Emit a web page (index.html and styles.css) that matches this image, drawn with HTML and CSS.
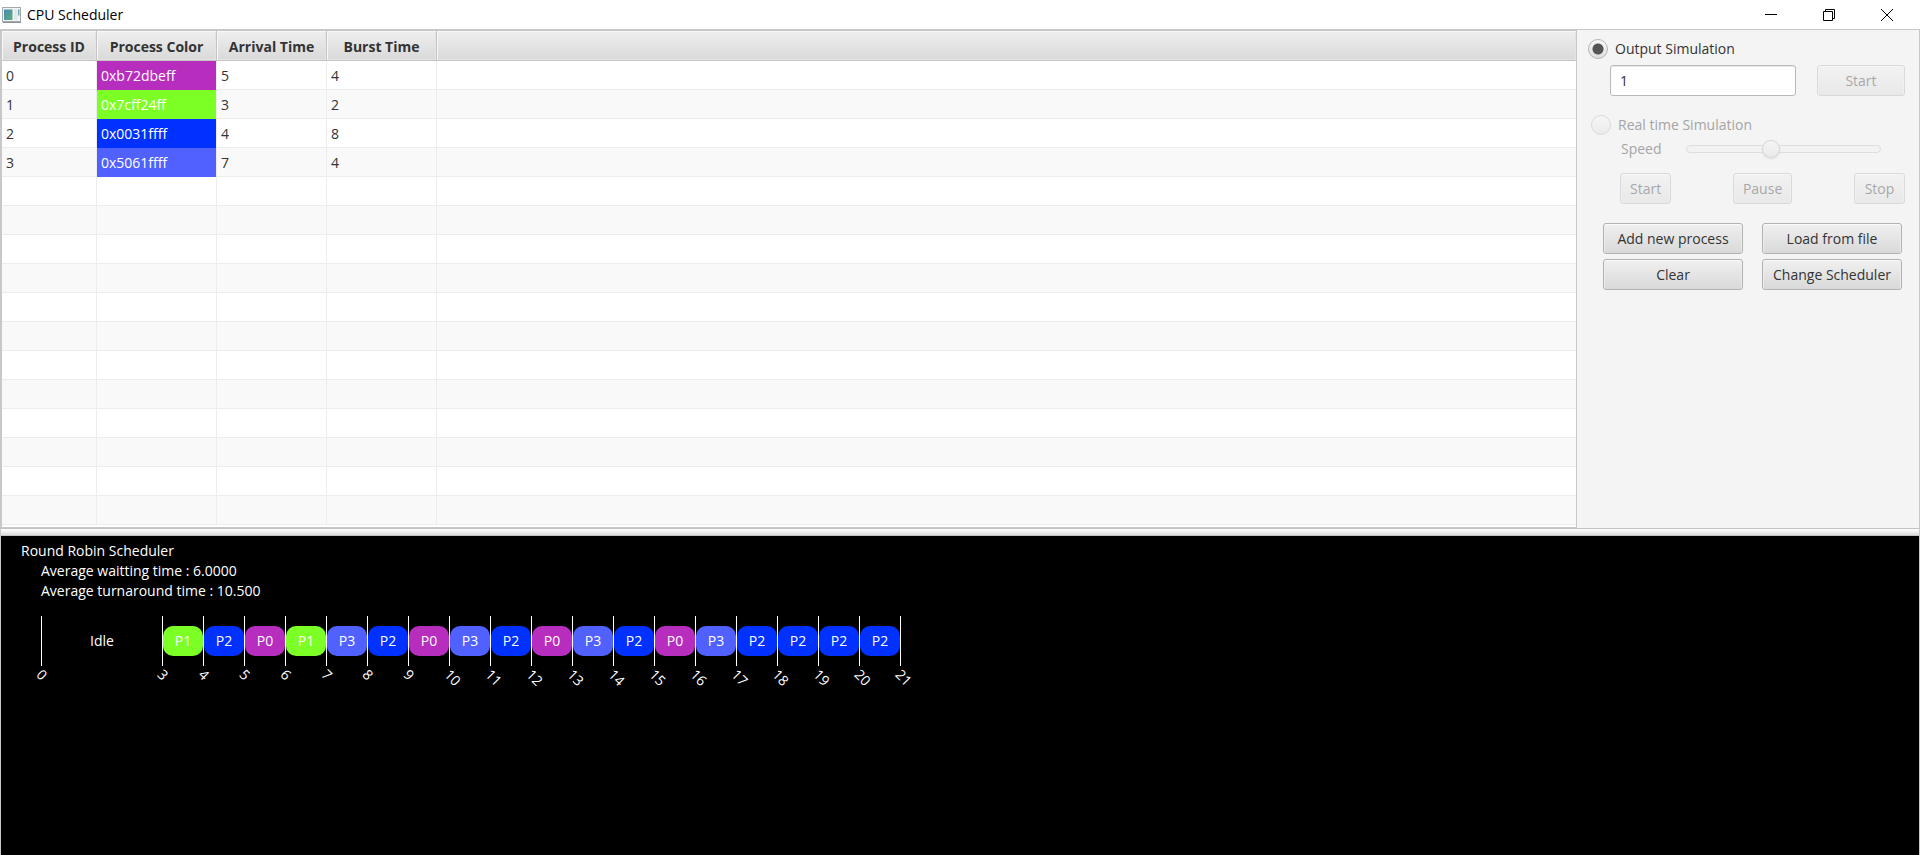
FILE: index.html
```
<!DOCTYPE html>
<html lang="en">
<head>
<meta charset="utf-8">
<title>CPU Scheduler</title>
<link rel="stylesheet" href="styles.css">
</head>
<body>
<header class="titlebar">
  <svg class="app-icon" width="20" height="16" viewBox="0 0 20 16" aria-hidden="true">
    <defs><linearGradient id="pane" x1="0" y1="0" x2="1" y2="1"><stop offset="0" stop-color="#4a87b0"/><stop offset="1" stop-color="#5fae7c"/></linearGradient></defs>
    <rect x="0.500" y="0.500" width="18" height="14" fill="#f1f3f4" stroke="#a3a8ab"/>
    <path d="M1 15.500H19" stroke="#8d9193"/>
    <rect x="2" y="2.500" width="8.500" height="10.500" fill="url(#pane)"/>
    <rect x="12" y="2.500" width="3.500" height="10.500" fill="#e2e7ea"/>
    <rect x="16" y="2.500" width="1.500" height="6" fill="#6cabb0"/>
  </svg>
  <h1 class="title">CPU Scheduler</h1>
  <div class="window-controls">
    <button class="window-button" aria-label="Minimize"><svg width="12" height="12" viewBox="0 0 12 12"><path d="M0 5.500H12"/></svg></button>
    <button class="window-button" aria-label="Restore"><svg width="12" height="12" viewBox="0 0 12 12"><path d="M0.500 2.500H9.500V11.500H0.500ZM2.500 2.500V0.500H11.500V9.500H9.500"/></svg></button>
    <button class="window-button" aria-label="Close"><svg width="12" height="12" viewBox="0 0 12 12"><path d="M0 0L12 12M12 0L0 12"/></svg></button>
  </div>
</header>
<main class="split">
  <div class="top">
    <div class="table-pane">
      <table class="processes">
        <colgroup><col class="col-id"><col class="col-color"><col class="col-time"><col class="col-time"><col></colgroup>
        <thead><tr><th>Process ID</th><th>Process Color</th><th>Arrival Time</th><th>Burst Time</th><td></td></tr></thead>
        <tbody>
          <tr><td>0</td><td class="swatch magenta">0xb72dbeff</td><td>5</td><td>4</td><td></td></tr>
          <tr><td>1</td><td class="swatch green">0x7cff24ff</td><td>3</td><td>2</td><td></td></tr>
          <tr><td>2</td><td class="swatch blue">0x0031ffff</td><td>4</td><td>8</td><td></td></tr>
          <tr><td>3</td><td class="swatch indigo">0x5061ffff</td><td>7</td><td>4</td><td></td></tr>
          <tr><td></td><td></td><td></td><td></td><td></td></tr>
          <tr><td></td><td></td><td></td><td></td><td></td></tr>
          <tr><td></td><td></td><td></td><td></td><td></td></tr>
          <tr><td></td><td></td><td></td><td></td><td></td></tr>
          <tr><td></td><td></td><td></td><td></td><td></td></tr>
          <tr><td></td><td></td><td></td><td></td><td></td></tr>
          <tr><td></td><td></td><td></td><td></td><td></td></tr>
          <tr><td></td><td></td><td></td><td></td><td></td></tr>
          <tr><td></td><td></td><td></td><td></td><td></td></tr>
          <tr><td></td><td></td><td></td><td></td><td></td></tr>
          <tr><td></td><td></td><td></td><td></td><td></td></tr>
          <tr><td></td><td></td><td></td><td></td><td></td></tr>
        </tbody>
      </table>
    </div>
    <form class="controls">
      <label class="radio"><input type="radio" name="mode" checked>Output Simulation</label>
      <div class="output-row">
        <input class="field" type="text" value="1" aria-label="Output simulation value">
        <button class="button wide" type="button" disabled>Start</button>
      </div>
      <label class="radio realtime"><input type="radio" name="mode" disabled>Real time Simulation</label>
      <div class="speed-row">
        <label for="speed">Speed</label>
        <input class="slider" id="speed" type="range" min="0" max="100" value="43" disabled>
      </div>
      <div class="playback">
        <button class="button" type="button" disabled>Start</button>
        <button class="button" type="button" disabled>Pause</button>
        <button class="button" type="button" disabled>Stop</button>
      </div>
      <div class="actions">
        <button class="button" type="button">Add new process</button>
        <button class="button" type="button">Load from file</button>
        <button class="button" type="button">Clear</button>
        <button class="button" type="button">Change Scheduler</button>
      </div>
    </form>
  </div>
  <div class="divider"></div>
  <section class="output">
    <h2 class="scheduler">Round Robin Scheduler</h2>
    <p class="stat">Average waitting time : 6.0000</p>
    <p class="stat">Average turnaround time : 10.500</p>
    <ol class="gantt">
      <li class="slot idle"><div class="lane"><span class="bar">Idle</span></div><span class="tick">0</span></li>
      <li class="slot"><div class="lane"><span class="bar green">P1</span></div><span class="tick">3</span></li>
      <li class="slot"><div class="lane"><span class="bar blue">P2</span></div><span class="tick">4</span></li>
      <li class="slot"><div class="lane"><span class="bar magenta">P0</span></div><span class="tick">5</span></li>
      <li class="slot"><div class="lane"><span class="bar green">P1</span></div><span class="tick">6</span></li>
      <li class="slot"><div class="lane"><span class="bar indigo">P3</span></div><span class="tick">7</span></li>
      <li class="slot"><div class="lane"><span class="bar blue">P2</span></div><span class="tick">8</span></li>
      <li class="slot"><div class="lane"><span class="bar magenta">P0</span></div><span class="tick">9</span></li>
      <li class="slot"><div class="lane"><span class="bar indigo">P3</span></div><span class="tick">10</span></li>
      <li class="slot"><div class="lane"><span class="bar blue">P2</span></div><span class="tick">11</span></li>
      <li class="slot"><div class="lane"><span class="bar magenta">P0</span></div><span class="tick">12</span></li>
      <li class="slot"><div class="lane"><span class="bar indigo">P3</span></div><span class="tick">13</span></li>
      <li class="slot"><div class="lane"><span class="bar blue">P2</span></div><span class="tick">14</span></li>
      <li class="slot"><div class="lane"><span class="bar magenta">P0</span></div><span class="tick">15</span></li>
      <li class="slot"><div class="lane"><span class="bar indigo">P3</span></div><span class="tick">16</span></li>
      <li class="slot"><div class="lane"><span class="bar blue">P2</span></div><span class="tick">17</span></li>
      <li class="slot"><div class="lane"><span class="bar blue">P2</span></div><span class="tick">18</span></li>
      <li class="slot"><div class="lane"><span class="bar blue">P2</span></div><span class="tick">19</span></li>
      <li class="slot"><div class="lane"><span class="bar blue">P2</span></div><span class="tick">20</span></li>
      <li class="slot end"><div class="lane"></div><span class="tick">21</span></li>
    </ol>
  </section>
</main>
</body>
</html>
```
FILE: styles.css
```
* { box-sizing: border-box; }

body {
  margin: 0;
  min-height: 100vh;
  display: flex;
  flex-direction: column;
  background: #fff;
  color: #333;
  font: 14px/20px "Segoe UI", "Open Sans", "Noto Sans", sans-serif;
}

button, input { font: inherit; color: inherit; margin: 0; }

/* Title bar */
.titlebar { display: flex; align-items: center; height: 29px; padding: 0 4px 0 2px; }
.app-icon { flex: none; }
.title { margin: 0 auto 0 5px; font-size: 14px; font-weight: 400; color: #000; }
.window-controls { display: flex; }
.window-button {
  display: flex;
  align-items: center;
  justify-content: center;
  width: 58px;
  height: 28px;
  padding: 0;
  border: 0;
  background: none;
}
.window-button svg { fill: none; stroke: #000; }

/* Split pane */
.split { flex: 1; display: flex; flex-direction: column; border: 1px solid #c8c8c8; border-bottom: 0; }
.top { display: flex; }
.table-pane { flex: 1; min-width: 0; padding-bottom: 2px; border: 1px solid #c8c8c8; }

.processes { width: 100%; table-layout: fixed; border-collapse: separate; border-spacing: 0; }
.col-id { width: 95px; }
.col-color { width: 120px; }
.col-time { width: 110px; }
.processes th, .processes td { padding: 2px 4px 0; border: solid #ededed; border-width: 0 1px 1px 0; text-align: left; }
.processes td:last-child { border-right: 0; }
.processes thead th, .processes thead td {
  height: 30px;
  border-color: #c4c4c4;
  background: linear-gradient(#efefef, #d9d9d9);
  box-shadow: inset 1px 1px #f8f8f8, inset -1px -1px #e4e4e4;
  text-align: center;
}
.processes tbody td { height: 29px; }
.processes tbody tr:nth-child(even) { background: #f9f9f9; }
.processes .swatch { padding-top: 0; border-bottom: 0; color: #fff; background-clip: padding-box; }

.magenta { background-color: #b72dbe; }
.green { background-color: #7cff24; }
.blue { background-color: #0031ff; }
.indigo { background-color: #5061ff; }

/* Simulation controls */
.controls { flex: none; width: 342px; padding: 9px 14px 0 11px; background: #f4f4f4; }
.radio { display: flex; align-items: center; gap: 7px; height: 20px; }
.radio input {
  appearance: none;
  width: 20px;
  height: 20px;
  border: 1px solid #b4b4b4;
  border-radius: 50%;
  background: linear-gradient(#fafafa, #dedede);
}
.radio input:checked { background: radial-gradient(circle, #555 5px, transparent 6px), linear-gradient(#fafafa, #dedede); }
.radio input:disabled, .slider:disabled { opacity: .4; }
.realtime { margin: 19px 0 0 3px; color: #a5a5a5; }

.output-row { display: flex; justify-content: space-between; gap: 21px; margin: 6px 0 0 22px; }
.field {
  flex: 1;
  min-width: 0;
  height: 31px;
  padding: 0 9px;
  border: 1px solid #bababa;
  border-radius: 3px;
  background: #fff;
  box-shadow: inset 0 1px 1px #e8e8e8;
}
.button {
  height: 31px;
  padding: 0 9px;
  border: 1px solid #b2b2b2;
  border-radius: 3px;
  background: linear-gradient(#f0f0f0, #d9d9d9);
  box-shadow: inset 0 1px #fbfbfb, inset 1px 0 #ececec, inset -1px 0 #ececec;
  white-space: nowrap;
}
.button:disabled { opacity: .4; }
.wide { width: 88px; }

.speed-row { display: flex; align-items: center; justify-content: space-between; height: 20px; margin: 4px 24px 0 33px; color: #a5a5a5; }
.slider { appearance: none; width: 195px; height: 18px; background: none; }
.slider::-webkit-slider-runnable-track { height: 8px; border: 1px solid #bcbcbc; border-radius: 4px; background: #f0f0f0; }
.slider::-webkit-slider-thumb {
  appearance: none;
  width: 18px;
  height: 18px;
  margin-top: -6px;
  border: 1px solid #aaa;
  border-radius: 50%;
  background: linear-gradient(#f4f4f4, #dedede);
  box-shadow: 0 1px 2px #bbb;
}

.playback { display: flex; justify-content: space-between; margin: 14px 0 0 32px; }
.playback .button { min-width: 51px; }
.actions { display: grid; grid-template-columns: 1fr 1fr; gap: 5px 19px; margin: 19px 3px 0 15px; }

.divider { height: 8px; border: solid #c4c4c4; border-width: 1px 0; background: linear-gradient(#fff, #dcdcdc); }

/* Scheduler output */
.output { flex: 1; padding: 5px 20px; background: #000; color: #fff; }
.scheduler, .stat { margin: 0; font-size: 14px; font-weight: 400; }
.stat { margin-left: 20px; }

.gantt { display: flex; margin: 15px 0 0 20px; padding: 0; list-style: none; }
.slot { flex: none; width: 41px; }
.idle { width: 121px; }
.end { width: 1px; }
.lane { height: 50px; padding: 10px 0; border-left: 1px solid #fff; }
.bar { display: block; height: 30px; border-radius: 10px; line-height: 30px; text-align: center; }
.tick { display: block; width: 20px; margin: -4px 0 0 -2px; transform: rotate(45deg); transform-origin: left center; }
```
